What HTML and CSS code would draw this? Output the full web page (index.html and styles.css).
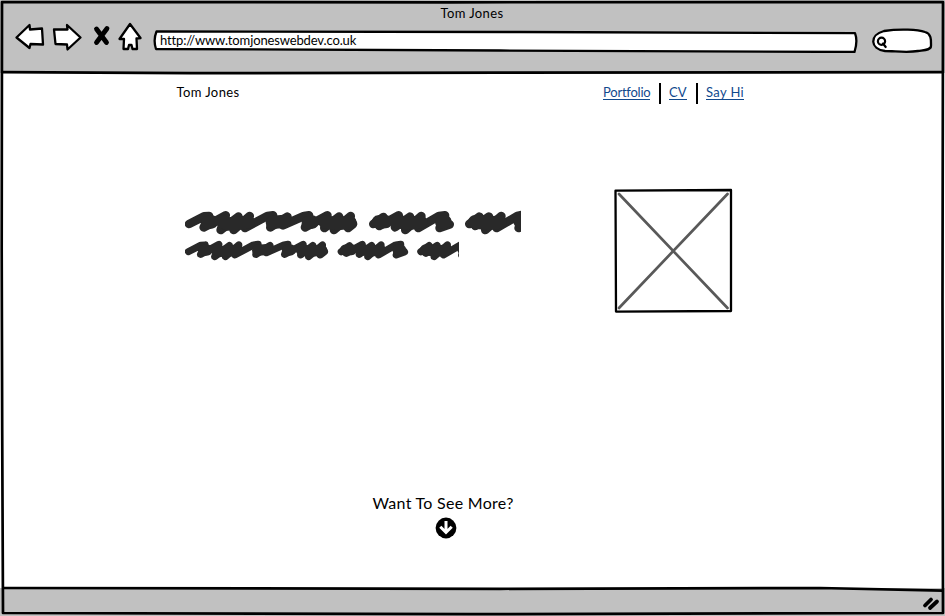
FILE: index.html
```html
<!DOCTYPE html>
<html lang="en">
<head>
<meta charset="utf-8">
<title>Tom Jones</title>
<link rel="stylesheet" href="styles.css">
</head>
<body>
<div class="window">
  <header class="chrome">
    <div class="title"><span>Tom Jones</span></div>
    <div class="toolbar">
      <svg class="buttons" width="128" height="32" viewBox="14 21 128 32">
        <g class="ink">
          <path d="M16.5 37.5 L29.5 25 L30 29.5 L42 28.5 L43 44.5 L30.5 44 L29.5 48 Z"/>
          <path d="M54 29.5 L67.5 29.5 L67 25 L80.5 37.5 L67.5 49.5 L67 44.5 L55.5 44 Z"/>
          <path d="M130 24 L140.5 38 L136.5 38.5 L137 49 L132.5 49 L131.5 45 L129 45 L128 49 L123.5 49 L124 39 L119.5 39 Z"/>
        </g>
        <path class="cross" d="M96.5 29 L106.5 42.5 M107 28.5 Q103 34 96.5 42.5"/>
      </svg>
      <div class="address">
        <svg width="706" height="24" viewBox="152 29 706 24"><path class="ink" d="M156.5 31.5 Q350 31 520 32 T855 33.2 Q858 41 854.5 52 Q660 50.5 500 50.5 T156 49 Q153 40 156.5 31.5 Z"/></svg>
        <span>http://www.tomjoneswebdev.co.uk</span>
      </div>
      <svg class="search" width="62" height="27" viewBox="871 27 62 27">
        <path class="ink" d="M884 31 C900 28.5 918 29.5 925 32 C932 34 931 41 931 46 C931 50 925 50 918 51 C907 53 895 51 885 51 C870 49 869 35 884 31 Z"/>
        <circle class="lens" cx="881.5" cy="41.3" r="3.6"/><path class="lens" d="M883 43.5 L885.7 47"/>
      </svg>
    </div>
  </header>
  <main class="page">
    <div class="top">
      <span class="brand">Tom Jones</span>
      <nav><a class="l1" href="#">Portfolio</a><i></i><a class="l2" href="#">CV</a><i></i><a class="l3" href="#">Say Hi</a></nav>
    </div>
    <section class="hero">
      <div class="copy">
        <svg class="line1" width="336.7" height="25.33" viewBox="28 30 1010 76">
          <g id="scribble" class="scribble">
            <path d="M40 72 L85 49 L100 48 L84 82 L150 46 L135 90 L188 50 L174 90 L222 48 L208 84 L275 48 L292 46 L284 82 L335 50 L322 76 L385 48 L400 46 L388 82 L455 46 L446 84 L490 50 L475 90 L525 48 L517 84 L532 72"/>
            <path d="M593 72 L623 51 L611 78 L669 46 L658 82 L703 50 L689 90 L737 48 L728 84 L790 48 L808 46 L792 84 L822 73"/>
            <path d="M881 72 L911 50 L899 78 L940 50 L929 90 L977 48 L963 84 L1025 48 L1042 44 L1029 84 L1045 80"/>
            <path class="mass" d="M96 68 L108 66 M142 66 L155 72 L185 70 L218 66 M290 67 L326 64 M398 67 L410 66 M448 66 L485 71 L523 67 M608 66 L630 65 M664 65 L700 70 L735 66 M798 66 L808 65 M897 66 L935 70 L974 66 M1033 64 L1045 66"/>
          </g>
        </svg>
        <svg class="line2" width="274.7" height="21" viewBox="28 30 993 76"><use href="#scribble"/></svg>
      </div>
      <svg class="photo" width="120" height="126" viewBox="613 188 120 126">
        <path class="frame" d="M615.5 190.7 L731 190 L731 311 L616 311.6 Z"/>
        <path class="diagonals" d="M619 194 L727.5 308 M727.5 194 L619 308"/>
      </svg>
    </section>
    <div class="more">
      <span>Want To See More?</span>
      <svg width="22" height="22" viewBox="0 0 22 22"><circle cx="11" cy="11" r="10.4"/><path d="M11 4 V15 M5.3 9.8 L11 15.5 L16.7 9.8"/></svg>
    </div>
  </main>
  <footer class="status"></footer>
  <svg class="outline" width="945" height="616" viewBox="0 0 945 616">
    <path d="M2 2 L450 2.3 L943 2 L942.5 300 L943 613 L470 614.2 L3 613 L2.2 430 L1.7 250 Z"/>
    <path d="M3 72.2 L190 73.2 L500 72.7 L943 72.2 M3 588 L500 588.8 L820 588 L943 590.7"/>
    <path class="grip" d="M925 605.5 L931 599.5 M930 608 L937 601.5"/>
  </svg>
</div>
</body>
</html>
```
FILE: styles.css
```css
body {
  margin: 0;
  background: #fff;
  color: #000;
  font: 13px/16px Lato, "Open Sans", sans-serif;
}
svg { display: block; flex: none; }
span, a { white-space: nowrap; }
.window {
  position: relative;
  display: flex;
  flex-direction: column;
  width: 945px;
  height: 616px;
  overflow: hidden;
}
.chrome { height: 73px; background: #c1c1c1; }
.title { text-align: center; height: 16px; padding: 5px 1px 0 0; letter-spacing: .4px; }
.toolbar { display: flex; padding-left: 14px; }
.ink { fill: #fff; stroke: #000; stroke-width: 2.3; stroke-linejoin: round; }
.cross { fill: none; stroke: #000; stroke-width: 4.8; stroke-linecap: round; }
.address { display: grid; margin: 8px 0 0 10px; }
.address > * { grid-area: 1 / 1; }
.address span { padding: 3px 0 0 8px; letter-spacing: -.13px; }
.search { margin: 6px 0 0 13px; }
.lens { fill: none; stroke: #000; stroke-width: 2.2; stroke-linecap: round; stroke-linejoin: round; }
.page { flex: 1; display: flex; flex-direction: column; }
.top { display: flex; justify-content: space-between; padding: 10px 201px 0 176.5px; height: 27px; }
.brand { padding-top: 1px; letter-spacing: .4px; }
nav { display: flex; gap: 8px; }
nav a {
  height: 15px;
  margin-top: 1px;
  line-height: 16px;
  color: #11498d;
  text-decoration: none;
  border-bottom: 1px solid #11498d;
}
.l1 { width: 47px; letter-spacing: -.22px; }
.l2 { width: 18px; }
.l3 { width: 38px; letter-spacing: .35px; }
nav i { width: 2px; height: 21px; margin-left: 1px; background: #000; }
.hero { display: flex; justify-content: space-between; padding: 78px 212px 0 184.8px; }
.copy { padding-top: 22px; }
.line2 { margin-top: 4.8px; }
.scribble { fill: none; stroke: #292929; stroke-width: 26; stroke-linecap: round; stroke-linejoin: round; }
.scribble .mass { stroke-width: 40; }
.frame { fill: #fff; stroke: #000; stroke-width: 2.3; stroke-linejoin: round; }
.diagonals { fill: none; stroke: #595959; stroke-width: 2.7; stroke-linecap: round; }
.more {
  display: flex;
  flex-direction: column;
  align-items: center;
  width: 142px;
  margin: 179px 0 0 372px;
  font-size: 16px;
  line-height: 20px;
}
.more span { letter-spacing: .28px; }
.more svg { margin: 4.4px 0 0 6px; }
.more path { fill: none; stroke: #fff; stroke-width: 3; }
.status { height: 28px; background: #c1c1c1; }
.outline { position: absolute; inset: 0; fill: none; stroke: #000; stroke-width: 2.7; stroke-linejoin: round; pointer-events: none; }
.outline .grip { stroke-width: 3.8; stroke-linecap: round; }
```
